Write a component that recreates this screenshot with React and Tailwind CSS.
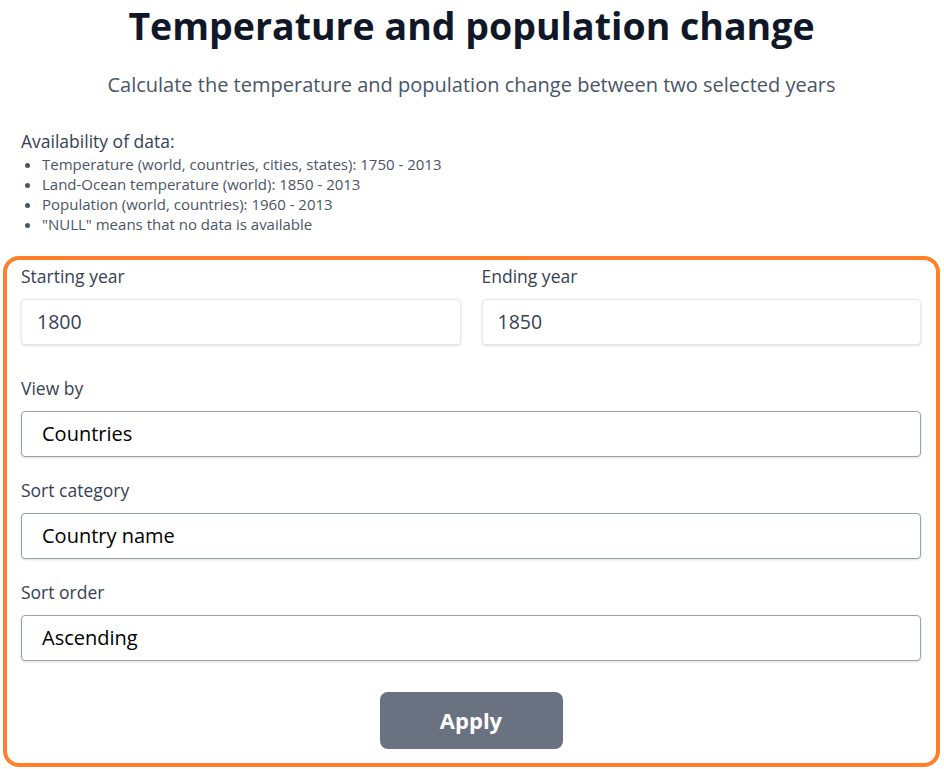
const availability = [
  'Temperature (world, countries, cities, states): 1750 - 2013',
  'Land-Ocean temperature (world): 1850 - 2013',
  'Population (world, countries): 1960 - 2013',
  '"NULL" means that no data is available',
];

function SelectField({ label, value, className = 'mt-[21px]' }) {
  return (
    <div className={className}>
      <label className="block text-[17.5px] leading-6 text-gray-700">{label}</label>
      <div className="mt-[11px] flex h-[46px] items-center rounded border border-gray-400 bg-white px-5 text-xl text-black shadow-sm">
        {value}
      </div>
    </div>
  );
}

function YearField({ label, value }) {
  return (
    <div className="flex-1">
      <label className="block text-[17.5px] leading-6 text-gray-700">{label}</label>
      <div className="mt-[11px] flex h-[46px] items-center rounded border border-gray-200 bg-white px-[15px] text-[19.5px] text-gray-700 shadow-sm">
        {value}
      </div>
    </div>
  );
}

export default function App() {
  return (
    <div className="min-h-screen bg-white pl-[3px] pr-[4px] font-['Open_Sans',sans-serif]">
      <h1 className="text-center text-[37.5px] font-bold leading-[52px] text-gray-900">
        Temperature and population change
      </h1>
      <p className="mt-[19px] text-center text-xl leading-7 text-gray-600">
        Calculate the temperature and population change between two selected years
      </p>

      <div className="mt-[30px] px-[18px]">
        <p className="text-[17.5px] leading-6 text-gray-700">Availability of data:</p>
        <ul className="mt-[1px] list-disc pl-[21px] text-[15px] leading-5 text-gray-600">
          {availability.map((item) => (
            <li key={item}>{item}</li>
          ))}
        </ul>
      </div>

      <div className="mt-[22px] rounded-2xl border-4 border-[#ff7f2a] pb-[14px] pl-[14px] pr-[15px] pt-[4px]">
        <div className="flex gap-[21px]">
          <YearField label="Starting year" value="1800" />
          <YearField label="Ending year" value="1850" />
        </div>
        <SelectField label="View by" value="Countries" className="mt-[31px]" />
        <SelectField label="Sort category" value="Country name" />
        <SelectField label="Sort order" value="Ascending" />
        <div className="mt-[31px] flex justify-center">
          <button className="h-[57px] w-[183px] rounded-lg bg-gray-500 text-[22px] font-bold text-white">
            Apply
          </button>
        </div>
      </div>
    </div>
  );
}
